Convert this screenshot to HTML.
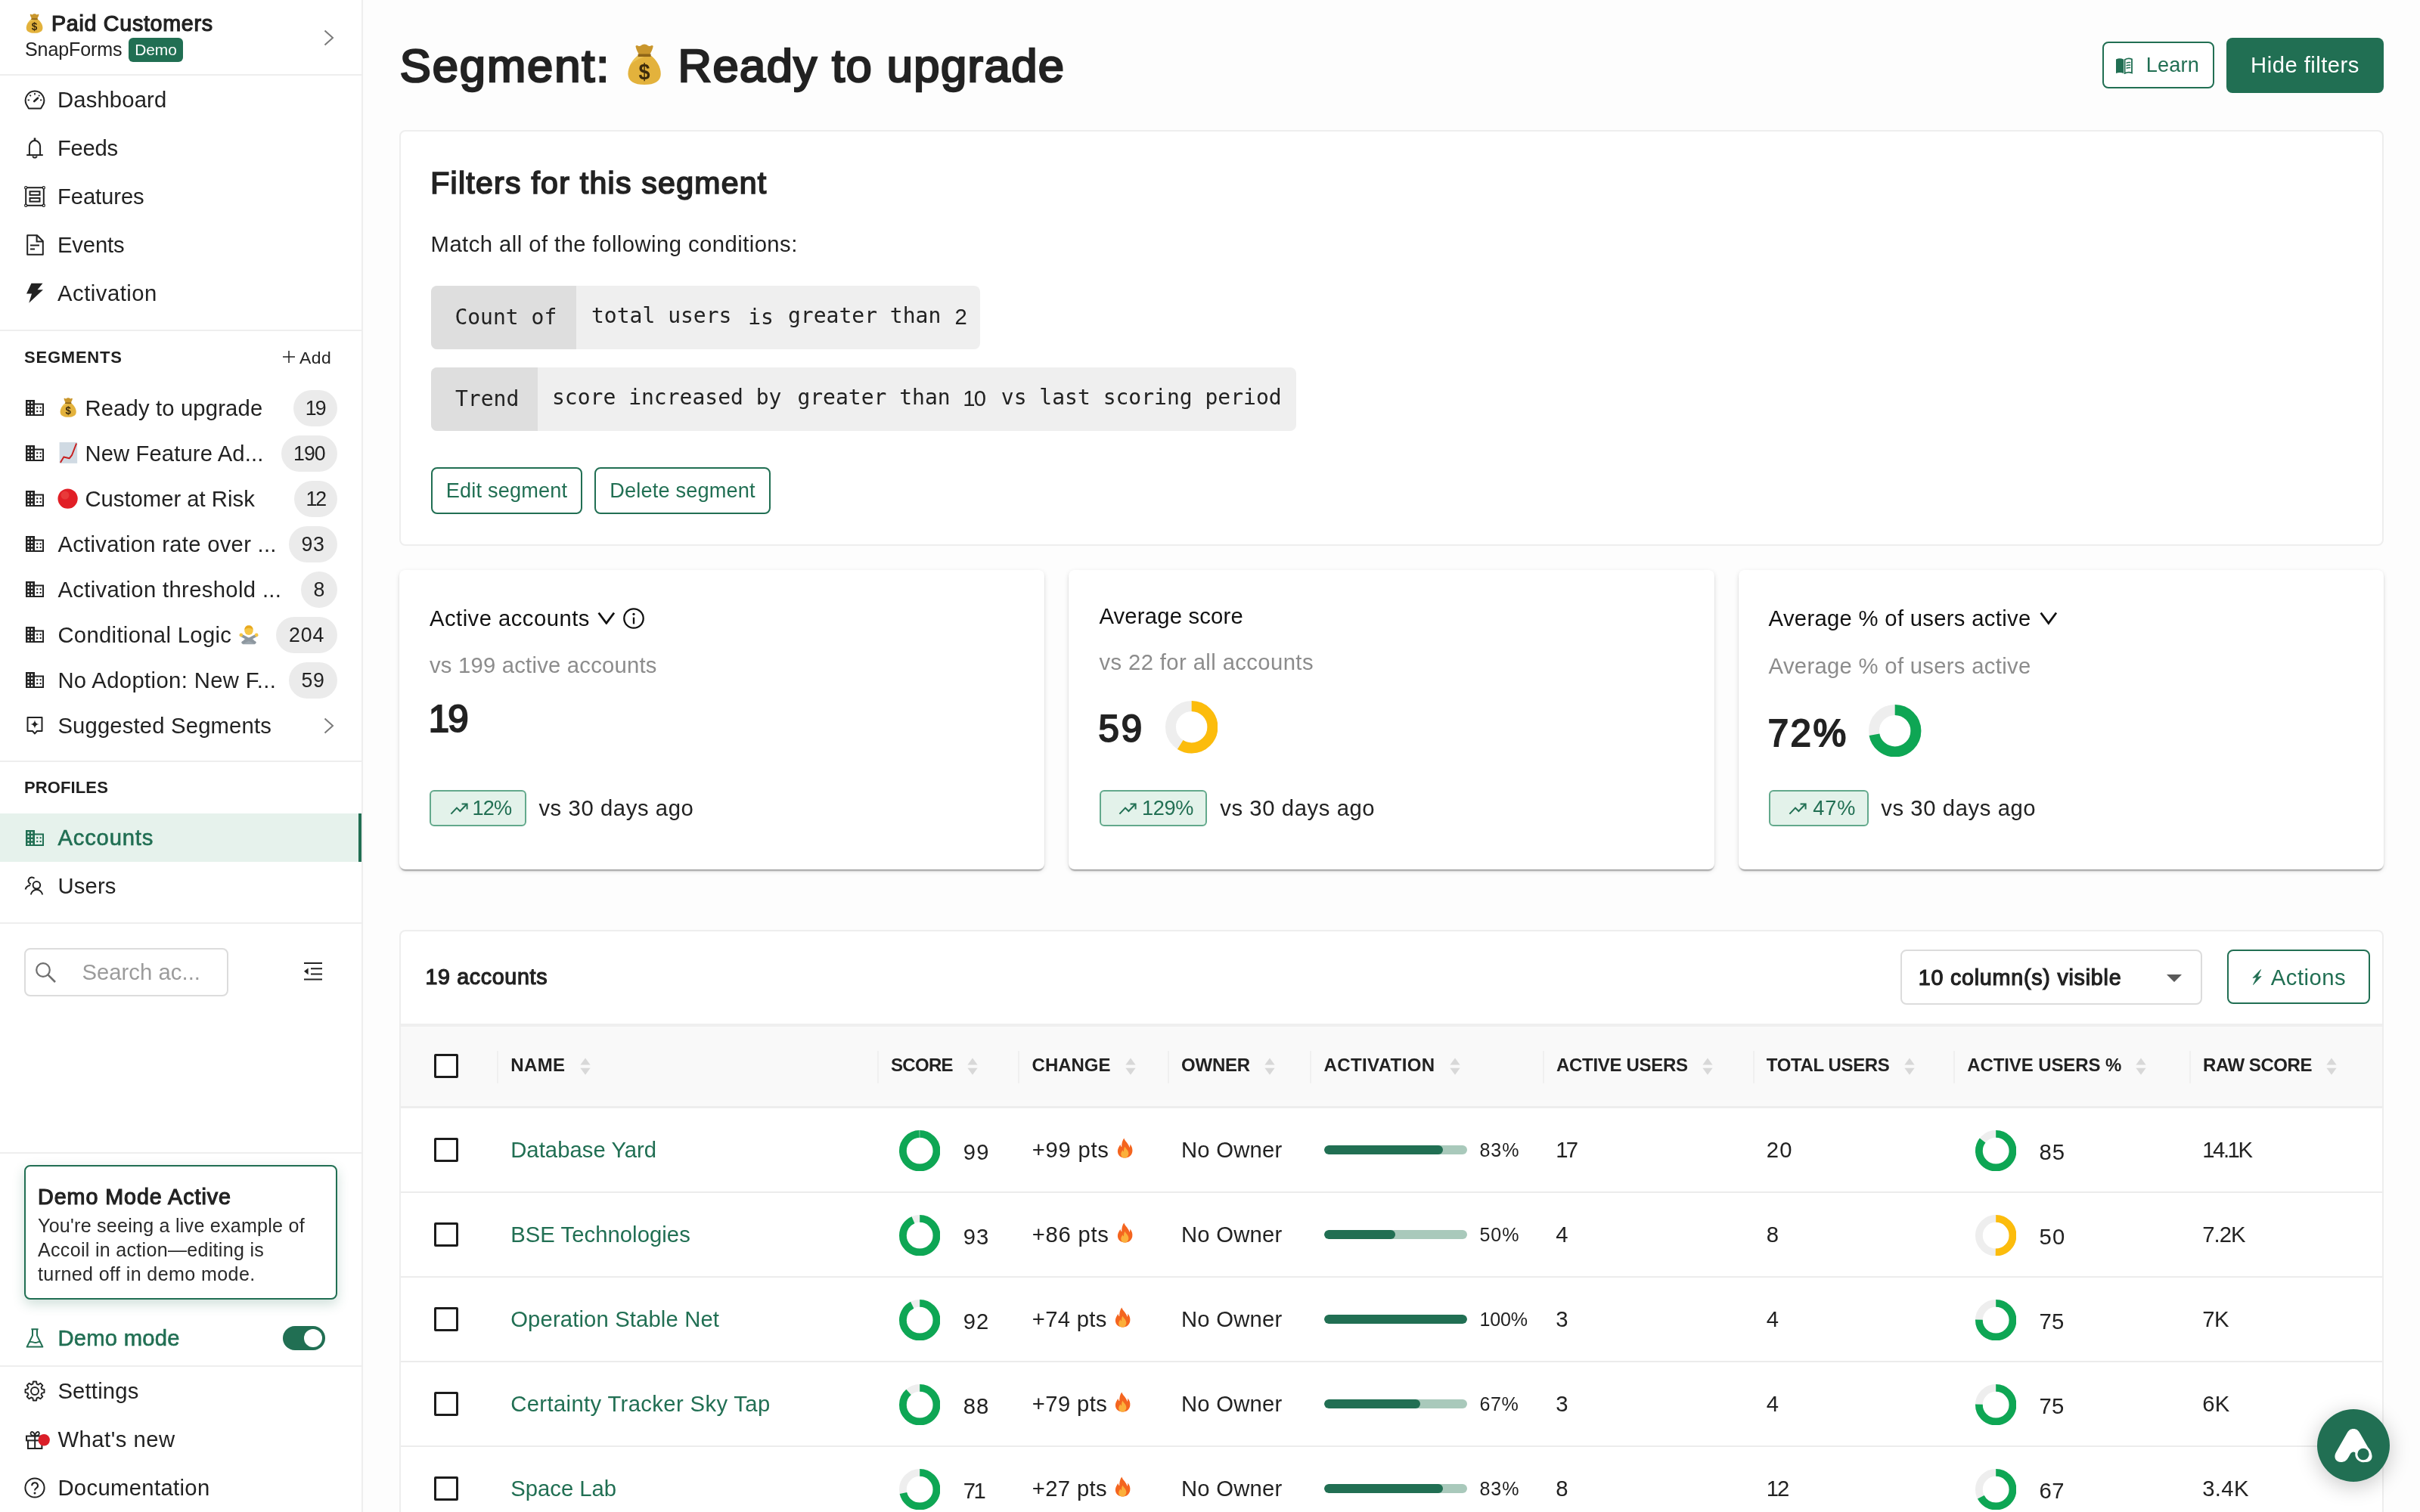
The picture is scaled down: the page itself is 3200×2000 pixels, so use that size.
<!DOCTYPE html>
<html lang="en">
<head>
<meta charset="utf-8">
<title>Segment: Ready to upgrade</title>
<style>
html{zoom:2;overflow:hidden;}
@media (max-width:2000px){html{zoom:1;}}
*{box-sizing:border-box;}
body{margin:0;width:1600px;height:1000px;overflow:hidden;background:#fdfdfd;color:#222;
  font-family:"Liberation Sans","DejaVu Sans",sans-serif;font-size:14.63px;line-height:20px;position:relative;will-change:transform;}
svg{display:block;}
.mono{font-family:"DejaVu Sans Mono","Liberation Mono",monospace;}
.x{position:absolute;white-space:nowrap;line-height:20px;height:20px;color:#222;}
#side{position:absolute;left:0;top:0;width:240px;height:1000px;background:#fff;border-right:1px solid #eeeeee;}
.hr{position:absolute;left:0;width:239px;height:1px;background:#eeeeee;}
i{font-style:normal;}
</style>
</head>
<body>
<div id="side">
<div style="position:absolute;left:16.00px;top:8.50px;"><svg width="13.6" height="14" viewBox="0 0 32 32" preserveAspectRatio="none" role="img" aria-label="💰" fill="none"><path d="M12 9.2C10.6 7 9.6 5 9.2 3.2C9 2.2 10 1.8 11 2.4C12.4 3.2 13.2 2.4 14.2 1.8C15.4 1.2 16.6 1.2 17.8 1.8C18.8 2.4 19.6 3.2 21 2.4C22 1.8 23 2.2 22.8 3.2C22.4 5 21.4 7 20 9.2Z" fill="#c9962c"/><path d="M11.6 9C6.6 12.4 3.2 17.6 3.2 22.8C3.2 28 8 30.6 16 30.6C24 30.6 28.8 28 28.8 22.8C28.8 17.6 25.4 12.4 20.4 9Z" fill="#e3b23c"/><path d="M11.6 9C8.6 11 6.2 13.8 4.6 16.8C8.6 12.8 12.6 11.4 20.4 9Z" fill="#f0cc62" opacity=".7"/><path d="M11 8.4H21V10.4H11Z" fill="#8f6518"/><text x="16" y="26.6" font-family="Liberation Sans, sans-serif" font-weight="700" font-size="16" text-anchor="middle" fill="#3d2b0c">$</text></svg></div>
<div class="x" style="left:34.00px;top:5.73px;font-size:14.35px;letter-spacing:0.345px;-webkit-text-stroke:0.6px #222;">Paid Customers</div>
<div class="x" style="left:16.50px;top:22.35px;font-size:12.54px;letter-spacing:-0.065px;">SnapForms</div>
<div style="position:absolute;left:85.00px;top:25.00px;width:36.00px;height:16.00px;background:#216f53;border-radius:3px;"></div>
<div class="x" style="left:89.10px;top:22.98px;font-size:10.45px;letter-spacing:-0.018px;color:#fff;">Demo</div>
<div style="position:absolute;left:214.00px;top:19.30px;"><svg width="7" height="11" viewBox="0 0 14 22" fill="none"><path d="M1.5 1.5L12 11L1.5 20.5" stroke="#7a7a7a" stroke-width="2"/></svg></div>
<div class="hr" style="top:49px;"></div>
<div style="position:absolute;left:16.00px;top:59.00px;"><svg width="14" height="14" viewBox="0 0 28 28" fill="none"><path d="M6 25.4H22L25.2 20A12.3 12.3 0 1 0 2.8 20Z" stroke="#222" stroke-width="2" stroke-linejoin="round"/><path d="M14 5v2.6M7.3 7.6l1.6 1.6M4.6 14.3h2.4M21 14.3h2.4M20.4 7.8l-1.3 1.3" stroke="#222" stroke-width="1.7"/><path d="M13.2 16L18 11.7" stroke="#222" stroke-width="2.6" stroke-linecap="round"/></svg></div>
<div class="x" style="left:38.00px;top:56.03px;font-size:14.63px;letter-spacing:0.071px;">Dashboard</div>
<div style="position:absolute;left:16.00px;top:91.00px;"><svg width="14" height="14" viewBox="0 0 28 28" fill="none"><path d="M6.9 23V11.2a7.1 7.1 0 0 1 14.2 0V23" stroke="#222" stroke-width="2"/><path d="M3.2 23.1H24.8" stroke="#222" stroke-width="2"/><path d="M14 0.4v3.8" stroke="#222" stroke-width="2.6"/><path d="M11.2 24.4a2.9 2.9 0 0 0 5.6 0" stroke="#222" stroke-width="1.8"/></svg></div>
<div class="x" style="left:38.00px;top:88.03px;font-size:14.63px;letter-spacing:-0.133px;">Feeds</div>
<div style="position:absolute;left:16.00px;top:123.00px;"><svg width="14" height="14" viewBox="0 0 28 28" fill="none"><rect x="2.2" y="2.2" width="23.6" height="23.6" stroke="#222" stroke-width="2"/><rect x="7.5" y="7.3" width="13" height="4.6" stroke="#222" stroke-width="2"/><rect x="7.5" y="16" width="13" height="4.6" stroke="#222" stroke-width="2"/><circle cx="2.2" cy="2.2" r="1.6" fill="#fff" stroke="#222" stroke-width="1.2"/><circle cx="2.2" cy="25.8" r="1.6" fill="#fff" stroke="#222" stroke-width="1.2"/><circle cx="25.8" cy="2.2" r="1.6" fill="#fff" stroke="#222" stroke-width="1.2"/><circle cx="25.8" cy="25.8" r="1.6" fill="#fff" stroke="#222" stroke-width="1.2"/></svg></div>
<div class="x" style="left:38.00px;top:120.03px;font-size:14.63px;letter-spacing:-0.052px;">Features</div>
<div style="position:absolute;left:16.00px;top:155.00px;"><svg width="14" height="14" viewBox="0 0 28 28" fill="none"><path d="M4.2 1.2H17L24.8 9V26.8H4.2Z" stroke="#222" stroke-width="2" stroke-linejoin="round"/><path d="M16.6 1.6V9.4H24.4" stroke="#222" stroke-width="2"/><path d="M8 14.6H20M8 19.4H14" stroke="#222" stroke-width="2"/></svg></div>
<div class="x" style="left:38.00px;top:152.03px;font-size:14.63px;letter-spacing:-0.075px;">Events</div>
<div style="position:absolute;left:16.00px;top:187.00px;"><svg width="14" height="14" viewBox="0 0 28 28" fill="none"><path d="M9.5 0.8H24.5L17.5 9.2H25L6.2 26.8L10 14.6H3Z" fill="#222"/></svg></div>
<div class="x" style="left:38.00px;top:184.03px;font-size:14.63px;letter-spacing:0.250px;">Activation</div>
<div class="hr" style="top:218px;"></div>
<div class="x" style="left:16.00px;top:226.59px;font-size:11.00px;letter-spacing:0.387px;font-weight:700;color:#1f1f1f;">SEGMENTS</div>
<div style="position:absolute;left:186.60px;top:231.60px;"><svg width="9" height="9" viewBox="0 0 18 18"><path d="M9 1V17M1 9H17" stroke="#222" stroke-width="1.5"/></svg></div>
<div class="x" style="left:198.00px;top:226.42px;font-size:11.49px;letter-spacing:0.202px;">Add</div>
<div style="position:absolute;left:17.00px;top:264.45px;"><svg width="12" height="10.5" viewBox="0 0 24 21" fill="none"><rect x="0" y="0" width="12" height="21" fill="#222"/><rect x="2.4" y="2.4" width="2.3" height="2.3" fill="#fff"/><rect x="7.0" y="2.4" width="2.3" height="2.3" fill="#fff"/><rect x="2.4" y="7.2" width="2.3" height="2.3" fill="#fff"/><rect x="7.0" y="7.2" width="2.3" height="2.3" fill="#fff"/><rect x="2.4" y="12" width="2.3" height="2.3" fill="#fff"/><rect x="7.0" y="12" width="2.3" height="2.3" fill="#fff"/><rect x="2.4" y="16.8" width="2.3" height="2.3" fill="#fff"/><rect x="7.0" y="16.8" width="2.3" height="2.3" fill="#fff"/><path d="M12 5.4H23V20H12" stroke="#222" stroke-width="2"/><rect x="14.2" y="9.2" width="2.1" height="2.1" fill="#222"/><rect x="18.6" y="9.2" width="2.1" height="2.1" fill="#222"/><rect x="14.2" y="14" width="2.1" height="2.1" fill="#222"/><rect x="18.6" y="14" width="2.1" height="2.1" fill="#222"/></svg></div>
<div style="position:absolute;left:38.60px;top:262.60px;"><svg width="13.2" height="14" viewBox="0 0 32 32" preserveAspectRatio="none" role="img" aria-label="💰" fill="none"><path d="M12 9.2C10.6 7 9.6 5 9.2 3.2C9 2.2 10 1.8 11 2.4C12.4 3.2 13.2 2.4 14.2 1.8C15.4 1.2 16.6 1.2 17.8 1.8C18.8 2.4 19.6 3.2 21 2.4C22 1.8 23 2.2 22.8 3.2C22.4 5 21.4 7 20 9.2Z" fill="#c9962c"/><path d="M11.6 9C6.6 12.4 3.2 17.6 3.2 22.8C3.2 28 8 30.6 16 30.6C24 30.6 28.8 28 28.8 22.8C28.8 17.6 25.4 12.4 20.4 9Z" fill="#e3b23c"/><path d="M11.6 9C8.6 11 6.2 13.8 4.6 16.8C8.6 12.8 12.6 11.4 20.4 9Z" fill="#f0cc62" opacity=".7"/><path d="M11 8.4H21V10.4H11Z" fill="#8f6518"/><text x="16" y="26.6" font-family="Liberation Sans, sans-serif" font-weight="700" font-size="16" text-anchor="middle" fill="#3d2b0c">$</text></svg></div>
<div class="x" style="left:56.20px;top:260.03px;font-size:14.63px;letter-spacing:0.074px;">Ready to upgrade</div>
<div style="position:absolute;left:193.80px;top:258.00px;width:29.20px;height:24.00px;border-radius:12px;background:#ebebeb;"></div>
<div class="x" style="left:201.93px;top:259.97px;font-size:13.36px;letter-spacing:-0.959px;">19</div>
<div style="position:absolute;left:17.00px;top:294.45px;"><svg width="12" height="10.5" viewBox="0 0 24 21" fill="none"><rect x="0" y="0" width="12" height="21" fill="#222"/><rect x="2.4" y="2.4" width="2.3" height="2.3" fill="#fff"/><rect x="7.0" y="2.4" width="2.3" height="2.3" fill="#fff"/><rect x="2.4" y="7.2" width="2.3" height="2.3" fill="#fff"/><rect x="7.0" y="7.2" width="2.3" height="2.3" fill="#fff"/><rect x="2.4" y="12" width="2.3" height="2.3" fill="#fff"/><rect x="7.0" y="12" width="2.3" height="2.3" fill="#fff"/><rect x="2.4" y="16.8" width="2.3" height="2.3" fill="#fff"/><rect x="7.0" y="16.8" width="2.3" height="2.3" fill="#fff"/><path d="M12 5.4H23V20H12" stroke="#222" stroke-width="2"/><rect x="14.2" y="9.2" width="2.1" height="2.1" fill="#222"/><rect x="18.6" y="9.2" width="2.1" height="2.1" fill="#222"/><rect x="14.2" y="14" width="2.1" height="2.1" fill="#222"/><rect x="18.6" y="14" width="2.1" height="2.1" fill="#222"/></svg></div>
<div style="position:absolute;left:38.40px;top:291.60px;"><svg width="13.4" height="15.9" viewBox="0 0 32 32" preserveAspectRatio="none" role="img" aria-label="📈" fill="none"><rect x="2" y="2" width="28" height="28" fill="#d7e0e8"/><rect x="2" y="2" width="28" height="28" fill="#c4cfda" opacity=".35"/><path d="M3.4 29L8.8 21.6L17.6 23.4L21.6 19.2L28.8 3.6" stroke="#c81e1e" stroke-width="2.2" stroke-linejoin="round"/></svg></div>
<div class="x" style="left:56.20px;top:290.03px;font-size:14.63px;letter-spacing:0.056px;">New Feature Ad...</div>
<div style="position:absolute;left:185.90px;top:288.00px;width:37.10px;height:24.00px;border-radius:12px;background:#ebebeb;"></div>
<div class="x" style="left:194.01px;top:289.97px;font-size:13.36px;letter-spacing:-0.466px;">190</div>
<div style="position:absolute;left:17.00px;top:324.45px;"><svg width="12" height="10.5" viewBox="0 0 24 21" fill="none"><rect x="0" y="0" width="12" height="21" fill="#222"/><rect x="2.4" y="2.4" width="2.3" height="2.3" fill="#fff"/><rect x="7.0" y="2.4" width="2.3" height="2.3" fill="#fff"/><rect x="2.4" y="7.2" width="2.3" height="2.3" fill="#fff"/><rect x="7.0" y="7.2" width="2.3" height="2.3" fill="#fff"/><rect x="2.4" y="12" width="2.3" height="2.3" fill="#fff"/><rect x="7.0" y="12" width="2.3" height="2.3" fill="#fff"/><rect x="2.4" y="16.8" width="2.3" height="2.3" fill="#fff"/><rect x="7.0" y="16.8" width="2.3" height="2.3" fill="#fff"/><path d="M12 5.4H23V20H12" stroke="#222" stroke-width="2"/><rect x="14.2" y="9.2" width="2.1" height="2.1" fill="#222"/><rect x="18.6" y="9.2" width="2.1" height="2.1" fill="#222"/><rect x="14.2" y="14" width="2.1" height="2.1" fill="#222"/><rect x="18.6" y="14" width="2.1" height="2.1" fill="#222"/></svg></div>
<div style="position:absolute;left:37.60px;top:322.60px;"><svg width="14.6" height="14.6" viewBox="0 0 32 32" role="img" aria-label="🔴" fill="none"><circle cx="16" cy="16" r="14.4" fill="#e11f26"/><circle cx="12" cy="11" r="6" fill="#f25a55" opacity=".45"/></svg></div>
<div class="x" style="left:56.20px;top:320.03px;font-size:14.63px;letter-spacing:0.002px;">Customer at Risk</div>
<div style="position:absolute;left:194.30px;top:318.00px;width:28.70px;height:24.00px;border-radius:12px;background:#ebebeb;"></div>
<div class="x" style="left:202.25px;top:319.97px;font-size:13.36px;letter-spacing:-1.023px;">12</div>
<div style="position:absolute;left:17.00px;top:354.45px;"><svg width="12" height="10.5" viewBox="0 0 24 21" fill="none"><rect x="0" y="0" width="12" height="21" fill="#222"/><rect x="2.4" y="2.4" width="2.3" height="2.3" fill="#fff"/><rect x="7.0" y="2.4" width="2.3" height="2.3" fill="#fff"/><rect x="2.4" y="7.2" width="2.3" height="2.3" fill="#fff"/><rect x="7.0" y="7.2" width="2.3" height="2.3" fill="#fff"/><rect x="2.4" y="12" width="2.3" height="2.3" fill="#fff"/><rect x="7.0" y="12" width="2.3" height="2.3" fill="#fff"/><rect x="2.4" y="16.8" width="2.3" height="2.3" fill="#fff"/><rect x="7.0" y="16.8" width="2.3" height="2.3" fill="#fff"/><path d="M12 5.4H23V20H12" stroke="#222" stroke-width="2"/><rect x="14.2" y="9.2" width="2.1" height="2.1" fill="#222"/><rect x="18.6" y="9.2" width="2.1" height="2.1" fill="#222"/><rect x="14.2" y="14" width="2.1" height="2.1" fill="#222"/><rect x="18.6" y="14" width="2.1" height="2.1" fill="#222"/></svg></div>
<div class="x" style="left:38.20px;top:350.03px;font-size:14.63px;letter-spacing:0.135px;">Activation rate over ...</div>
<div style="position:absolute;left:191.10px;top:348.00px;width:31.90px;height:24.00px;border-radius:12px;background:#ebebeb;"></div>
<div class="x" style="left:199.25px;top:349.97px;font-size:13.36px;letter-spacing:0.370px;">93</div>
<div style="position:absolute;left:17.00px;top:384.45px;"><svg width="12" height="10.5" viewBox="0 0 24 21" fill="none"><rect x="0" y="0" width="12" height="21" fill="#222"/><rect x="2.4" y="2.4" width="2.3" height="2.3" fill="#fff"/><rect x="7.0" y="2.4" width="2.3" height="2.3" fill="#fff"/><rect x="2.4" y="7.2" width="2.3" height="2.3" fill="#fff"/><rect x="7.0" y="7.2" width="2.3" height="2.3" fill="#fff"/><rect x="2.4" y="12" width="2.3" height="2.3" fill="#fff"/><rect x="7.0" y="12" width="2.3" height="2.3" fill="#fff"/><rect x="2.4" y="16.8" width="2.3" height="2.3" fill="#fff"/><rect x="7.0" y="16.8" width="2.3" height="2.3" fill="#fff"/><path d="M12 5.4H23V20H12" stroke="#222" stroke-width="2"/><rect x="14.2" y="9.2" width="2.1" height="2.1" fill="#222"/><rect x="18.6" y="9.2" width="2.1" height="2.1" fill="#222"/><rect x="14.2" y="14" width="2.1" height="2.1" fill="#222"/><rect x="18.6" y="14" width="2.1" height="2.1" fill="#222"/></svg></div>
<div class="x" style="left:38.20px;top:380.03px;font-size:14.63px;letter-spacing:0.169px;">Activation threshold ...</div>
<div style="position:absolute;left:199.20px;top:378.00px;width:23.80px;height:24.00px;border-radius:12px;background:#ebebeb;"></div>
<div class="x" style="left:207.20px;top:379.97px;font-size:13.36px;letter-spacing:0.367px;">8</div>
<div style="position:absolute;left:17.00px;top:414.45px;"><svg width="12" height="10.5" viewBox="0 0 24 21" fill="none"><rect x="0" y="0" width="12" height="21" fill="#222"/><rect x="2.4" y="2.4" width="2.3" height="2.3" fill="#fff"/><rect x="7.0" y="2.4" width="2.3" height="2.3" fill="#fff"/><rect x="2.4" y="7.2" width="2.3" height="2.3" fill="#fff"/><rect x="7.0" y="7.2" width="2.3" height="2.3" fill="#fff"/><rect x="2.4" y="12" width="2.3" height="2.3" fill="#fff"/><rect x="7.0" y="12" width="2.3" height="2.3" fill="#fff"/><rect x="2.4" y="16.8" width="2.3" height="2.3" fill="#fff"/><rect x="7.0" y="16.8" width="2.3" height="2.3" fill="#fff"/><path d="M12 5.4H23V20H12" stroke="#222" stroke-width="2"/><rect x="14.2" y="9.2" width="2.1" height="2.1" fill="#222"/><rect x="18.6" y="9.2" width="2.1" height="2.1" fill="#222"/><rect x="14.2" y="14" width="2.1" height="2.1" fill="#222"/><rect x="18.6" y="14" width="2.1" height="2.1" fill="#222"/></svg></div>
<div class="x" style="left:38.20px;top:410.03px;font-size:14.63px;letter-spacing:0.160px;">Conditional Logic</div>
<div style="position:absolute;left:157.37px;top:412.50px;"><svg width="14" height="14" viewBox="0 0 32 32" role="img" aria-label="🙅‍♂️" fill="none"><path d="M7 31C7 24 10 21.4 16 21.4C22 21.4 25 24 25 31Z" fill="#9aa5ad"/><circle cx="16" cy="10.4" r="6.6" fill="#f6c644"/><path d="M9.6 9.2C9.6 4.6 12.4 2.6 16 2.6C19.6 2.6 22.4 4.6 22.4 9.2C20.4 7.4 18.4 6.6 16 6.6C13.6 6.6 11.6 7.4 9.6 9.2Z" fill="#e8a91f"/><path d="M4 17.4L25 28.4M28 17.4L7 28.4" stroke="#8d979f" stroke-width="4.2" stroke-linecap="round"/><circle cx="4.4" cy="17" r="2.6" fill="#f6c644"/><circle cx="27.6" cy="17" r="2.6" fill="#f6c644"/></svg></div>
<div style="position:absolute;left:182.70px;top:408.00px;width:40.30px;height:24.00px;border-radius:12px;background:#ebebeb;"></div>
<div class="x" style="left:190.96px;top:409.97px;font-size:13.36px;letter-spacing:0.496px;">204</div>
<div style="position:absolute;left:17.00px;top:444.45px;"><svg width="12" height="10.5" viewBox="0 0 24 21" fill="none"><rect x="0" y="0" width="12" height="21" fill="#222"/><rect x="2.4" y="2.4" width="2.3" height="2.3" fill="#fff"/><rect x="7.0" y="2.4" width="2.3" height="2.3" fill="#fff"/><rect x="2.4" y="7.2" width="2.3" height="2.3" fill="#fff"/><rect x="7.0" y="7.2" width="2.3" height="2.3" fill="#fff"/><rect x="2.4" y="12" width="2.3" height="2.3" fill="#fff"/><rect x="7.0" y="12" width="2.3" height="2.3" fill="#fff"/><rect x="2.4" y="16.8" width="2.3" height="2.3" fill="#fff"/><rect x="7.0" y="16.8" width="2.3" height="2.3" fill="#fff"/><path d="M12 5.4H23V20H12" stroke="#222" stroke-width="2"/><rect x="14.2" y="9.2" width="2.1" height="2.1" fill="#222"/><rect x="18.6" y="9.2" width="2.1" height="2.1" fill="#222"/><rect x="14.2" y="14" width="2.1" height="2.1" fill="#222"/><rect x="18.6" y="14" width="2.1" height="2.1" fill="#222"/></svg></div>
<div class="x" style="left:38.20px;top:440.03px;font-size:14.63px;letter-spacing:0.178px;">No Adoption: New F...</div>
<div style="position:absolute;left:191.10px;top:438.00px;width:31.90px;height:24.00px;border-radius:12px;background:#ebebeb;"></div>
<div class="x" style="left:199.31px;top:439.97px;font-size:13.36px;letter-spacing:0.309px;">59</div>
<div style="position:absolute;left:16.00px;top:473.00px;"><svg width="14" height="14" viewBox="0 0 28 28" fill="none"><path d="M4.5 3H23.5V21H17L14 24.4L11 21H4.5Z" stroke="#222" stroke-width="2" stroke-linejoin="round"/><path d="M14 6.2C14.6 10 16 11.4 19.8 12C16 12.6 14.6 14 14 17.8C13.4 14 12 12.6 8.2 12C12 11.4 13.4 10 14 6.2Z" fill="#222"/></svg></div>
<div class="x" style="left:38.20px;top:470.03px;font-size:14.63px;letter-spacing:0.082px;">Suggested Segments</div>
<div style="position:absolute;left:214.00px;top:474.50px;"><svg width="7" height="11" viewBox="0 0 14 22" fill="none"><path d="M1.5 1.5L12 11L1.5 20.5" stroke="#7a7a7a" stroke-width="2"/></svg></div>
<div class="hr" style="top:503px;"></div>
<div class="x" style="left:16.00px;top:511.19px;font-size:11.00px;letter-spacing:0.058px;font-weight:700;color:#1f1f1f;">PROFILES</div>
<div style="position:absolute;left:0.00px;top:538.00px;width:239.00px;height:32.00px;background:#e6f2ec;border-right:2px solid #216f53;"></div>
<div style="position:absolute;left:17.00px;top:548.75px;"><svg width="12" height="10.5" viewBox="0 0 24 21" fill="none"><rect x="0" y="0" width="12" height="21" fill="#216f53"/><rect x="2.4" y="2.4" width="2.3" height="2.3" fill="#e6f2ec"/><rect x="7.0" y="2.4" width="2.3" height="2.3" fill="#e6f2ec"/><rect x="2.4" y="7.2" width="2.3" height="2.3" fill="#e6f2ec"/><rect x="7.0" y="7.2" width="2.3" height="2.3" fill="#e6f2ec"/><rect x="2.4" y="12" width="2.3" height="2.3" fill="#e6f2ec"/><rect x="7.0" y="12" width="2.3" height="2.3" fill="#e6f2ec"/><rect x="2.4" y="16.8" width="2.3" height="2.3" fill="#e6f2ec"/><rect x="7.0" y="16.8" width="2.3" height="2.3" fill="#e6f2ec"/><path d="M12 5.4H23V20H12" stroke="#216f53" stroke-width="2"/><rect x="14.2" y="9.2" width="2.1" height="2.1" fill="#216f53"/><rect x="18.6" y="9.2" width="2.1" height="2.1" fill="#216f53"/><rect x="14.2" y="14" width="2.1" height="2.1" fill="#216f53"/><rect x="18.6" y="14" width="2.1" height="2.1" fill="#216f53"/></svg></div>
<div class="x" style="left:38.20px;top:544.03px;font-size:14.63px;letter-spacing:0.410px;color:#216f53;-webkit-text-stroke:0.3px #216f53;">Accounts</div>
<div style="position:absolute;left:16.00px;top:579.00px;"><svg width="14" height="14" viewBox="0 0 28 28" fill="none"><circle cx="16.4" cy="12.8" r="4.8" stroke="#222" stroke-width="2"/><path d="M8.8 25.4a7.8 7.8 0 0 1 15.4 0" stroke="#222" stroke-width="2"/><path d="M13.5 3.9a4.6 4.6 0 1 0 -4.6 7.6" stroke="#222" stroke-width="2"/><path d="M1.6 18.6a7.4 7.4 0 0 1 6.4 -5.6" stroke="#222" stroke-width="2"/></svg></div>
<div class="x" style="left:38.20px;top:576.03px;font-size:14.63px;letter-spacing:0.085px;">Users</div>
<div class="hr" style="top:610px;"></div>
<div style="position:absolute;left:16.00px;top:627.00px;width:135.00px;height:32.00px;border:1px solid #dcdcdc;border-radius:4px;background:#fff;"></div>
<div style="position:absolute;left:23.00px;top:636.00px;"><svg width="14" height="14" viewBox="0 0 28 28" fill="none"><circle cx="11" cy="11" r="8.8" stroke="#6f6f6f" stroke-width="2.2"/><path d="M17.4 17.4L27 27" stroke="#6f6f6f" stroke-width="2.6"/></svg></div>
<div class="x" style="left:54.20px;top:633.03px;font-size:14.63px;letter-spacing:0.024px;color:#9b9b9b;">Search ac...</div>
<div style="position:absolute;left:200.50px;top:636.20px;"><svg width="13" height="13" viewBox="0 0 26 26" fill="none"><path d="M1 2H25M10 9.2H25M10 16.4H25M1 23.6H25" stroke="#222" stroke-width="2"/><path d="M6.6 8.4V17.2L1 12.8Z" fill="#222"/></svg></div>
<div class="hr" style="top:762px;"></div>
<div style="position:absolute;left:16.00px;top:770.50px;width:207.00px;height:89.00px;border:1px solid #216f53;border-radius:4px;background:#fff;box-shadow:0 3px 8px rgba(33,111,83,.22);"></div>
<div class="x" style="left:25.00px;top:781.33px;font-size:14.35px;letter-spacing:0.473px;-webkit-text-stroke:0.6px #222;">Demo Mode Active</div>
<div class="x" style="left:25.00px;top:800.45px;font-size:12.54px;letter-spacing:0.120px;color:#2a2a2a;">You're seeing a live example of</div>
<div class="x" style="left:25.00px;top:816.35px;font-size:12.54px;letter-spacing:0.145px;color:#2a2a2a;">Accoil in action—editing is</div>
<div class="x" style="left:25.00px;top:832.25px;font-size:12.54px;letter-spacing:0.193px;color:#2a2a2a;">turned off in demo mode.</div>
<div style="position:absolute;left:16.00px;top:878.00px;"><svg width="14" height="14" viewBox="0 0 28 28" fill="none"><path d="M9.4 2.2H18.6M11 2.4V10.6L3.6 25.6H24.4L17 10.6V2.4" stroke="#216f53" stroke-width="2" stroke-linejoin="round"/><path d="M6.4 19.6C10 17 13 21.4 17 19.6C19 18.6 20.6 18.8 21.8 19.6" stroke="#216f53" stroke-width="1.8"/></svg></div>
<div class="x" style="left:38.20px;top:875.03px;font-size:14.63px;letter-spacing:0.115px;color:#216f53;-webkit-text-stroke:0.3px #216f53;">Demo mode</div>
<div style="position:absolute;left:187.00px;top:877.00px;width:28.00px;height:16.00px;border-radius:8px;background:#216f53;"><i style="position:absolute;right:2px;top:2px;width:12px;height:12px;border-radius:6px;background:#fff;"></i></div>
<div class="hr" style="top:903px;"></div>
<div style="position:absolute;left:16.00px;top:913.00px;"><svg width="14" height="14" viewBox="0 0 28 28" fill="none"><path d="M11.41 4.65L11.90 1.47L16.10 1.47L16.59 4.65L18.78 5.56L21.37 3.66L24.34 6.63L22.44 9.22L23.35 11.41L26.53 11.90L26.53 16.10L23.35 16.59L22.44 18.78L24.34 21.37L21.37 24.34L18.78 22.44L16.59 23.35L16.10 26.53L11.90 26.53L11.41 23.35L9.22 22.44L6.63 24.34L3.66 21.37L5.56 18.78L4.65 16.59L1.47 16.10L1.47 11.90L4.65 11.41L5.56 9.22L3.66 6.63L6.63 3.66L9.22 5.56Z" stroke="#222" stroke-width="1.9" stroke-linejoin="round"/><circle cx="14" cy="14" r="5" stroke="#222" stroke-width="1.9"/></svg></div>
<div class="x" style="left:38.20px;top:910.03px;font-size:14.63px;letter-spacing:0.092px;">Settings</div>
<div style="position:absolute;left:16.00px;top:945.00px;"><svg width="17" height="14" viewBox="0 0 34 28" style="margin-right:-3px;" fill="none"><rect x="3" y="9.6" width="22.4" height="5.8" stroke="#222" stroke-width="2"/><path d="M5 15.4V26H23.4V15.4M14.2 9.6V26" stroke="#222" stroke-width="2"/><path d="M14.2 9.4C10 9.4 8 7.6 8.6 5.4C9.4 2.8 13.2 3.6 14.2 9.4C15.2 3.6 19 2.8 19.8 5.4C20.4 7.6 18.4 9.4 14.2 9.4Z" stroke="#222" stroke-width="1.8"/><circle cx="26.2" cy="14.8" r="7.7" fill="#da1e28"/></svg></div>
<div class="x" style="left:38.20px;top:942.03px;font-size:14.63px;letter-spacing:0.252px;">What's new</div>
<div style="position:absolute;left:16.00px;top:977.00px;"><svg width="14" height="14" viewBox="0 0 28 28" fill="none"><circle cx="14" cy="14" r="12.6" stroke="#222" stroke-width="2"/><path d="M10.2 11.2a3.9 3.9 0 1 1 5.6 3.4C14.4 15.4 14 16 14 17.6" stroke="#222" stroke-width="2"/><circle cx="14" cy="21" r="1.5" fill="#222"/></svg></div>
<div class="x" style="left:38.20px;top:974.03px;font-size:14.63px;letter-spacing:0.170px;">Documentation</div>
</div>
<div id="main">
<div class="x" style="left:264.40px;top:23.35px;font-size:30.75px;letter-spacing:0.957px;-webkit-text-stroke:1.29px #222;line-height:40px;height:40px;">Segment:</div>
<div style="position:absolute;left:412.60px;top:27.80px;"><svg width="27.1" height="29.3" viewBox="0 0 32 32" preserveAspectRatio="none" role="img" aria-label="💰" fill="none"><path d="M12 9.2C10.6 7 9.6 5 9.2 3.2C9 2.2 10 1.8 11 2.4C12.4 3.2 13.2 2.4 14.2 1.8C15.4 1.2 16.6 1.2 17.8 1.8C18.8 2.4 19.6 3.2 21 2.4C22 1.8 23 2.2 22.8 3.2C22.4 5 21.4 7 20 9.2Z" fill="#c9962c"/><path d="M11.6 9C6.6 12.4 3.2 17.6 3.2 22.8C3.2 28 8 30.6 16 30.6C24 30.6 28.8 28 28.8 22.8C28.8 17.6 25.4 12.4 20.4 9Z" fill="#e3b23c"/><path d="M11.6 9C8.6 11 6.2 13.8 4.6 16.8C8.6 12.8 12.6 11.4 20.4 9Z" fill="#f0cc62" opacity=".7"/><path d="M11 8.4H21V10.4H11Z" fill="#8f6518"/><text x="16" y="26.6" font-family="Liberation Sans, sans-serif" font-weight="700" font-size="16" text-anchor="middle" fill="#3d2b0c">$</text></svg></div>
<div class="x" style="left:448.30px;top:23.35px;font-size:30.75px;letter-spacing:0.716px;-webkit-text-stroke:1.29px #222;line-height:40px;height:40px;">Ready to upgrade</div>
<div style="position:absolute;left:1390.00px;top:27.50px;width:74.00px;height:31.00px;border:1px solid #216f53;border-radius:4px;background:#fff;"></div>
<div style="position:absolute;left:1398.50px;top:38.20px;"><svg width="11.5" height="11" viewBox="0 0 23 22" fill="none"><path d="M1 2.4C4.4 1 8 1 11 2.6V21C8 19.6 4.4 19.6 1 21Z" fill="#216f53"/><path d="M12.6 3C15.4 1.4 19 1 22 2.4V20.4C19 19.2 15.4 19.4 12.6 21Z" stroke="#216f53" stroke-width="1.8"/><path d="M14.6 7.4C16.6 6.6 18.4 6.4 20.2 6.8M14.6 10.8C16.6 10 18.4 9.8 20.2 10.2M14.6 14.2C16.6 13.4 18.4 13.2 20.2 13.6" stroke="#216f53" stroke-width="1.5"/></svg></div>
<div class="x" style="left:1418.90px;top:33.19px;font-size:13.58px;letter-spacing:0.078px;color:#216f53;">Learn</div>
<div style="position:absolute;left:1472.00px;top:25.00px;width:104.00px;height:36.50px;border-radius:4px;background:#216f53;"></div>
<div class="x" style="left:1488.05px;top:33.13px;font-size:14.63px;letter-spacing:0.233px;color:#fff;">Hide filters</div>
<div style="position:absolute;left:264.00px;top:86.00px;width:1312.00px;height:275.00px;background:#fff;border:1px solid #eeeeee;border-radius:4px;"></div>
<div class="x" style="left:284.60px;top:105.90px;font-size:20.50px;letter-spacing:0.639px;-webkit-text-stroke:0.86px #222;line-height:30px;height:30px;">Filters for this segment</div>
<div class="x" style="left:284.80px;top:151.33px;font-size:14.63px;letter-spacing:0.222px;">Match all of the following conditions:</div>
<div style="position:absolute;left:285.00px;top:189.00px;width:363.00px;height:42.00px;border-radius:4px;background:#efefef;overflow:hidden;"><i style="position:absolute;left:0;top:0;width:96px;height:42px;background:#dedede;"></i></div>
<div class="x mono" style="left:300.70px;top:199.96px;font-size:14px;color:#222;">Count of</div>
<div class="x mono" style="left:391.00px;top:198.76px;font-size:14px;color:#222;">total users</div>
<div class="x mono" style="left:494.60px;top:199.96px;font-size:14px;color:#222;">is</div>
<div class="x mono" style="left:521.00px;top:198.76px;font-size:14px;color:#222;">greater than</div>
<div class="x" style="left:631.20px;top:199.53px;font-size:14.63px;letter-spacing:0.401px;">2</div>
<div style="position:absolute;left:285.00px;top:243.00px;width:572.00px;height:42.00px;border-radius:4px;background:#efefef;overflow:hidden;"><i style="position:absolute;left:0;top:0;width:70.4px;height:42px;background:#dedede;"></i></div>
<div class="x mono" style="left:301.00px;top:253.96px;font-size:14px;color:#222;">Trend</div>
<div class="x mono" style="left:365.00px;top:252.76px;font-size:14px;color:#222;">score increased by</div>
<div class="x mono" style="left:527.20px;top:252.76px;font-size:14px;color:#222;">greater than</div>
<div class="x" style="left:636.60px;top:253.53px;font-size:14.63px;letter-spacing:-0.873px;">10</div>
<div class="x mono" style="left:661.90px;top:252.76px;font-size:14px;color:#222;">vs last scoring period</div>
<div style="position:absolute;left:285.00px;top:309.00px;width:100.00px;height:31.00px;border:1px solid #216f53;border-radius:4px;background:#fff;"></div>
<div class="x" style="left:294.93px;top:314.59px;font-size:13.58px;letter-spacing:0.072px;color:#216f53;">Edit segment</div>
<div style="position:absolute;left:393.00px;top:309.00px;width:116.50px;height:31.00px;border:1px solid #216f53;border-radius:4px;background:#fff;"></div>
<div class="x" style="left:403.07px;top:314.59px;font-size:13.58px;letter-spacing:0.087px;color:#216f53;">Delete segment</div>
<div style="position:absolute;left:264.00px;top:376.80px;width:426.70px;height:198.20px;background:#fff;border-radius:4px;box-shadow:0 2px 1px -1px rgba(0,0,0,.2),0 1px 1px 0 rgba(0,0,0,.14),0 1px 3px 0 rgba(0,0,0,.12);"></div>
<div style="position:absolute;left:706.60px;top:376.80px;width:426.70px;height:198.20px;background:#fff;border-radius:4px;box-shadow:0 2px 1px -1px rgba(0,0,0,.2),0 1px 1px 0 rgba(0,0,0,.14),0 1px 3px 0 rgba(0,0,0,.12);"></div>
<div style="position:absolute;left:1149.30px;top:376.80px;width:426.70px;height:198.20px;background:#fff;border-radius:4px;box-shadow:0 2px 1px -1px rgba(0,0,0,.2),0 1px 1px 0 rgba(0,0,0,.14),0 1px 3px 0 rgba(0,0,0,.12);"></div>
<div class="x" style="left:284.00px;top:398.93px;font-size:14.63px;letter-spacing:0.233px;color:#111;">Active accounts</div>
<div style="position:absolute;left:395.00px;top:404.90px;"><svg width="11.8" height="8.2" viewBox="0 0 23.6 16.4" fill="none"><path d="M1.6 0.6L11.8 14.4L22 0.6" stroke="#111" stroke-width="2.7"/></svg></div>
<div style="position:absolute;left:412.00px;top:401.90px;"><svg width="14" height="14" viewBox="0 0 28 28" fill="none"><circle cx="14" cy="14" r="12.7" stroke="#111" stroke-width="2.3"/><path d="M14 12.6V21.4" stroke="#111" stroke-width="2.3"/><circle cx="14" cy="8.3" r="1.6" fill="#111"/></svg></div>
<div class="x" style="left:284.00px;top:430.23px;font-size:14.63px;letter-spacing:0.107px;color:#8c8c8c;">vs 199 active accounts</div>
<div class="x" style="left:283.40px;top:460.48px;font-size:24.60px;letter-spacing:-0.931px;-webkit-text-stroke:1.03px #222;line-height:30px;height:30px;">19</div>
<div style="position:absolute;left:284.00px;top:522.50px;width:63.80px;height:24.00px;border:1px solid #63a98c;background:#e3f2ea;border-radius:3px;"></div><div style="position:absolute;left:297.30px;top:529.60px;"><svg width="12" height="10.5" viewBox="0 0 24 21" fill="none"><path d="M1.4 17.6L9 9.6L13.4 14L22 5" stroke="#216f53" stroke-width="2"/><path d="M15.6 4.4H22.6V11.4" stroke="#216f53" stroke-width="2"/></svg></div><div class="x" style="left:312.20px;top:524.39px;font-size:13.58px;letter-spacing:-0.403px;color:#216f53;">12%</div>
<div class="x" style="left:356.20px;top:524.53px;font-size:14.63px;letter-spacing:0.296px;">vs 30 days ago</div>
<div class="x" style="left:726.70px;top:397.73px;font-size:14.63px;letter-spacing:0.092px;color:#111;">Average score</div>
<div class="x" style="left:726.70px;top:427.93px;font-size:14.63px;letter-spacing:0.199px;color:#8c8c8c;">vs 22 for all accounts</div>
<div class="x" style="left:726.20px;top:467.18px;font-size:24.60px;letter-spacing:1.541px;-webkit-text-stroke:1.03px #222;line-height:30px;height:30px;">59</div>
<div style="position:absolute;left:770.35px;top:463.65px;"><svg width="34.7" height="34.7" viewBox="0 0 34.7 34.7" fill="none"><circle cx="17.35" cy="17.35" r="13.850000000000001" stroke="#eeeeee" stroke-width="7"/><circle cx="17.35" cy="17.35" r="13.850000000000001" stroke="#fcbc0c" stroke-width="7" stroke-dasharray="51.34 87.02" transform="rotate(-90 17.35 17.35)"/></svg></div>
<div style="position:absolute;left:726.80px;top:522.50px;width:71.20px;height:24.00px;border:1px solid #63a98c;background:#e3f2ea;border-radius:3px;"></div><div style="position:absolute;left:739.60px;top:529.60px;"><svg width="12" height="10.5" viewBox="0 0 24 21" fill="none"><path d="M1.4 17.6L9 9.6L13.4 14L22 5" stroke="#216f53" stroke-width="2"/><path d="M15.6 4.4H22.6V11.4" stroke="#216f53" stroke-width="2"/></svg></div><div class="x" style="left:755.00px;top:524.39px;font-size:13.58px;letter-spacing:-0.176px;color:#216f53;">129%</div>
<div class="x" style="left:806.60px;top:524.53px;font-size:14.63px;letter-spacing:0.296px;">vs 30 days ago</div>
<div class="x" style="left:1169.30px;top:399.23px;font-size:14.63px;letter-spacing:0.152px;color:#111;">Average % of users active</div>
<div style="position:absolute;left:1348.40px;top:405.20px;"><svg width="11.8" height="8.2" viewBox="0 0 23.6 16.4" fill="none"><path d="M1.6 0.6L11.8 14.4L22 0.6" stroke="#111" stroke-width="2.7"/></svg></div>
<div class="x" style="left:1169.30px;top:430.33px;font-size:14.63px;letter-spacing:0.152px;color:#8c8c8c;">Average % of users active</div>
<div class="x" style="left:1168.90px;top:469.78px;font-size:24.60px;letter-spacing:1.217px;-webkit-text-stroke:1.03px #222;line-height:30px;height:30px;">72%</div>
<div style="position:absolute;left:1235.65px;top:465.95px;"><svg width="34.7" height="34.7" viewBox="0 0 34.7 34.7" fill="none"><circle cx="17.35" cy="17.35" r="13.850000000000001" stroke="#eeeeee" stroke-width="7"/><circle cx="17.35" cy="17.35" r="13.850000000000001" stroke="#0ea654" stroke-width="7" stroke-dasharray="62.66 87.02" transform="rotate(-90 17.35 17.35)"/></svg></div>
<div style="position:absolute;left:1169.70px;top:522.50px;width:65.80px;height:24.00px;border:1px solid #63a98c;background:#e3f2ea;border-radius:3px;"></div><div style="position:absolute;left:1182.50px;top:529.60px;"><svg width="12" height="10.5" viewBox="0 0 24 21" fill="none"><path d="M1.4 17.6L9 9.6L13.4 14L22 5" stroke="#216f53" stroke-width="2"/><path d="M15.6 4.4H22.6V11.4" stroke="#216f53" stroke-width="2"/></svg></div><div class="x" style="left:1198.60px;top:524.39px;font-size:13.58px;letter-spacing:0.443px;color:#216f53;">47%</div>
<div class="x" style="left:1243.60px;top:524.53px;font-size:14.63px;letter-spacing:0.296px;">vs 30 days ago</div>
<div style="position:absolute;left:264.00px;top:615.00px;width:1312.00px;height:385.00px;background:#fff;border:1px solid #eeeeee;border-bottom:none;border-radius:4px 4px 0 0;"></div>
<div class="x" style="left:281.20px;top:636.03px;font-size:14.35px;letter-spacing:0.322px;-webkit-text-stroke:0.6px #222;">19 accounts</div>
<div style="position:absolute;left:1256.60px;top:628.00px;width:199.60px;height:36.60px;border:1px solid #dcdcdc;border-radius:4px;background:#fff;"></div>
<div class="x" style="left:1268.40px;top:636.63px;font-size:14.35px;letter-spacing:0.377px;color:#222;-webkit-text-stroke:0.6px #222;">10 column(s) visible</div>
<div style="position:absolute;left:1432.60px;top:644.50px;"><svg width="10" height="5" viewBox="0 0 20 10"><path d="M0 0H20L10 10Z" fill="#5a5a5a"/></svg></div>
<div style="position:absolute;left:1472.60px;top:628.00px;width:94.30px;height:36.20px;border:1px solid #216f53;border-radius:4px;background:#fff;"></div>
<div style="position:absolute;left:1488.60px;top:641.20px;"><svg width="7.5" height="10.5" viewBox="0 0 15 21" fill="none"><path d="M12.5 0.5L2 11.6L7.2 10.5L2.5 20.5L13 9.4L7.8 10.5Z" fill="#216f53" stroke="#216f53" stroke-width="0.8" stroke-linejoin="round"/></svg></div>
<div class="x" style="left:1501.40px;top:636.33px;font-size:14.63px;letter-spacing:0.244px;color:#216f53;">Actions</div>
<div style="position:absolute;left:265.00px;top:677.00px;width:1310.00px;height:56.00px;background:#f9f9f9;border-top:2px solid #efefef;border-bottom:1.5px solid #ededed;"></div>
<div style="position:absolute;left:287.00px;top:697.00px;width:16.20px;height:16.20px;border:1.5px solid #1c1c1c;border-radius:1px;background:#fff;"></div>
<div style="position:absolute;left:328.50px;top:695.00px;width:1.00px;height:21.60px;background:#f0f0f0;"></div>
<div class="x" style="left:337.60px;top:694.74px;font-size:12.00px;letter-spacing:0.211px;font-weight:700;color:#222;">NAME</div>
<div style="position:absolute;left:383.38px;top:699.30px;"><svg width="7" height="11.6" viewBox="0 0 14 23.2" fill="none"><path d="M7 0.4L13.6 9.4H0.4Z" fill="#d8d8d8"/><path d="M7 22.8L13.6 13.8H0.4Z" fill="#d8d8d8"/></svg></div>
<div style="position:absolute;left:579.90px;top:695.00px;width:1.00px;height:21.60px;background:#f0f0f0;"></div>
<div class="x" style="left:589.00px;top:694.74px;font-size:12.00px;letter-spacing:-0.342px;font-weight:700;color:#222;">SCORE</div>
<div style="position:absolute;left:639.56px;top:699.30px;"><svg width="7" height="11.6" viewBox="0 0 14 23.2" fill="none"><path d="M7 0.4L13.6 9.4H0.4Z" fill="#d8d8d8"/><path d="M7 22.8L13.6 13.8H0.4Z" fill="#d8d8d8"/></svg></div>
<div style="position:absolute;left:673.20px;top:695.00px;width:1.00px;height:21.60px;background:#f0f0f0;"></div>
<div class="x" style="left:682.30px;top:694.74px;font-size:12.00px;letter-spacing:-0.020px;font-weight:700;color:#222;">CHANGE</div>
<div style="position:absolute;left:743.79px;top:699.30px;"><svg width="7" height="11.6" viewBox="0 0 14 23.2" fill="none"><path d="M7 0.4L13.6 9.4H0.4Z" fill="#d8d8d8"/><path d="M7 22.8L13.6 13.8H0.4Z" fill="#d8d8d8"/></svg></div>
<div style="position:absolute;left:771.90px;top:695.00px;width:1.00px;height:21.60px;background:#f0f0f0;"></div>
<div class="x" style="left:781.00px;top:694.74px;font-size:12.00px;letter-spacing:-0.104px;font-weight:700;color:#222;">OWNER</div>
<div style="position:absolute;left:836.07px;top:699.30px;"><svg width="7" height="11.6" viewBox="0 0 14 23.2" fill="none"><path d="M7 0.4L13.6 9.4H0.4Z" fill="#d8d8d8"/><path d="M7 22.8L13.6 13.8H0.4Z" fill="#d8d8d8"/></svg></div>
<div style="position:absolute;left:866.20px;top:695.00px;width:1.00px;height:21.60px;background:#f0f0f0;"></div>
<div class="x" style="left:875.30px;top:694.74px;font-size:12.00px;letter-spacing:0.188px;font-weight:700;color:#222;">ACTIVATION</div>
<div style="position:absolute;left:958.33px;top:699.30px;"><svg width="7" height="11.6" viewBox="0 0 14 23.2" fill="none"><path d="M7 0.4L13.6 9.4H0.4Z" fill="#d8d8d8"/><path d="M7 22.8L13.6 13.8H0.4Z" fill="#d8d8d8"/></svg></div>
<div style="position:absolute;left:1019.90px;top:695.00px;width:1.00px;height:21.60px;background:#f0f0f0;"></div>
<div class="x" style="left:1029.00px;top:694.74px;font-size:12.00px;letter-spacing:-0.149px;font-weight:700;color:#222;">ACTIVE USERS</div>
<div style="position:absolute;left:1125.49px;top:699.30px;"><svg width="7" height="11.6" viewBox="0 0 14 23.2" fill="none"><path d="M7 0.4L13.6 9.4H0.4Z" fill="#d8d8d8"/><path d="M7 22.8L13.6 13.8H0.4Z" fill="#d8d8d8"/></svg></div>
<div style="position:absolute;left:1158.80px;top:695.00px;width:1.00px;height:21.60px;background:#f0f0f0;"></div>
<div class="x" style="left:1167.90px;top:694.74px;font-size:12.00px;letter-spacing:-0.182px;font-weight:700;color:#222;">TOTAL USERS</div>
<div style="position:absolute;left:1258.84px;top:699.30px;"><svg width="7" height="11.6" viewBox="0 0 14 23.2" fill="none"><path d="M7 0.4L13.6 9.4H0.4Z" fill="#d8d8d8"/><path d="M7 22.8L13.6 13.8H0.4Z" fill="#d8d8d8"/></svg></div>
<div style="position:absolute;left:1291.50px;top:695.00px;width:1.00px;height:21.60px;background:#f0f0f0;"></div>
<div class="x" style="left:1300.60px;top:694.74px;font-size:12.00px;letter-spacing:-0.051px;font-weight:700;color:#222;">ACTIVE USERS %</div>
<div style="position:absolute;left:1412.17px;top:699.30px;"><svg width="7" height="11.6" viewBox="0 0 14 23.2" fill="none"><path d="M7 0.4L13.6 9.4H0.4Z" fill="#d8d8d8"/><path d="M7 22.8L13.6 13.8H0.4Z" fill="#d8d8d8"/></svg></div>
<div style="position:absolute;left:1447.40px;top:695.00px;width:1.00px;height:21.60px;background:#f0f0f0;"></div>
<div class="x" style="left:1456.50px;top:694.74px;font-size:12.00px;letter-spacing:-0.225px;font-weight:700;color:#222;">RAW SCORE</div>
<div style="position:absolute;left:1538.08px;top:699.30px;"><svg width="7" height="11.6" viewBox="0 0 14 23.2" fill="none"><path d="M7 0.4L13.6 9.4H0.4Z" fill="#d8d8d8"/><path d="M7 22.8L13.6 13.8H0.4Z" fill="#d8d8d8"/></svg></div>
<div style="position:absolute;left:265.00px;top:787.90px;width:1310.00px;height:1.00px;background:#ececec;"></div>
<div style="position:absolute;left:287.00px;top:752.50px;width:16.20px;height:16.20px;border:1.5px solid #1c1c1c;border-radius:1px;background:#fff;"></div>
<div class="x" style="left:337.60px;top:750.33px;font-size:14.63px;letter-spacing:0.021px;color:#216f53;">Database Yard</div>
<div style="position:absolute;left:594.30px;top:747.30px;"><svg width="27.2" height="27.2" viewBox="0 0 27.2 27.2" fill="none"><circle cx="13.6" cy="13.6" r="11.149999999999999" stroke="#eeeeee" stroke-width="4.9"/><circle cx="13.6" cy="13.6" r="11.149999999999999" stroke="#0ea654" stroke-width="4.9" stroke-dasharray="69.36 70.06" transform="rotate(-90 13.6 13.6)"/></svg></div>
<div class="x" style="left:636.90px;top:751.93px;font-size:14.63px;letter-spacing:0.545px;">99</div>
<div class="x" style="left:682.40px;top:750.33px;font-size:14.63px;letter-spacing:0.367px;">+99 pts</div>
<div style="position:absolute;left:737.37px;top:752.60px;"><svg width="12.6" height="13.5" viewBox="1.6 0.6 21.6 28.4" role="img" aria-label="🔥" fill="none"><path d="M11 1C12.4 5.2 17.6 8.8 18.8 14.4C19.4 12.6 19.6 11.4 19.4 9.6C22 12.6 23.2 16.2 22.6 20C21.8 25.2 17.6 28.6 12 28.6C6.2 28.6 2.2 24.6 2.2 19.4C2.2 15.4 4.4 12.6 5.8 10C6.4 11.6 6.8 12.6 7.8 13.6C7.6 9 8.6 4.4 11 1Z" fill="#f4651f"/><path d="M12.2 13C13.4 16 17.4 18.2 17.4 22.4C17.4 26 15 28.6 12 28.6C8.8 28.6 6.8 26.2 6.8 23.2C6.8 20.8 8.2 19.4 9 17.6C9.6 18.8 10 19.4 10.8 20C10.6 17.6 11 15 12.2 13Z" fill="#fbb03b"/></svg></div>
<div class="x" style="left:781.00px;top:750.33px;font-size:14.63px;letter-spacing:0.111px;">No Owner</div>
<div style="position:absolute;left:875.40px;top:757.35px;width:94.60px;height:6.30px;border-radius:3.2px;background:#a9c9bb;overflow:hidden;"><i style="display:block;width:83%;height:6.3px;border-radius:3.2px;background:#216f53;"></i></div>
<div class="x" style="left:978.20px;top:750.25px;font-size:12.54px;letter-spacing:0.507px;">83%</div>
<div class="x" style="left:1028.60px;top:750.33px;font-size:14.63px;letter-spacing:-1.328px;">17</div>
<div class="x" style="left:1167.90px;top:750.33px;font-size:14.63px;letter-spacing:0.548px;">20</div>
<div style="position:absolute;left:1305.90px;top:747.30px;"><svg width="27.2" height="27.2" viewBox="0 0 27.2 27.2" fill="none"><circle cx="13.6" cy="13.6" r="11.149999999999999" stroke="#eeeeee" stroke-width="4.9"/><circle cx="13.6" cy="13.6" r="11.149999999999999" stroke="#0ea654" stroke-width="4.9" stroke-dasharray="59.55 70.06" transform="rotate(-90 13.6 13.6)"/></svg></div>
<div class="x" style="left:1348.30px;top:751.93px;font-size:14.63px;letter-spacing:0.449px;">85</div>
<div class="x" style="left:1456.10px;top:750.33px;font-size:14.63px;letter-spacing:-1.208px;">14.1K</div>
<div style="position:absolute;left:265.00px;top:843.90px;width:1310.00px;height:1.00px;background:#ececec;"></div>
<div style="position:absolute;left:287.00px;top:808.50px;width:16.20px;height:16.20px;border:1.5px solid #1c1c1c;border-radius:1px;background:#fff;"></div>
<div class="x" style="left:337.60px;top:806.33px;font-size:14.63px;letter-spacing:0.024px;color:#216f53;">BSE Technologies</div>
<div style="position:absolute;left:594.30px;top:803.30px;"><svg width="27.2" height="27.2" viewBox="0 0 27.2 27.2" fill="none"><circle cx="13.6" cy="13.6" r="11.149999999999999" stroke="#eeeeee" stroke-width="4.9"/><circle cx="13.6" cy="13.6" r="11.149999999999999" stroke="#0ea654" stroke-width="4.9" stroke-dasharray="65.15 70.06" transform="rotate(-90 13.6 13.6)"/></svg></div>
<div class="x" style="left:636.90px;top:807.93px;font-size:14.63px;letter-spacing:0.528px;">93</div>
<div class="x" style="left:682.40px;top:806.33px;font-size:14.63px;letter-spacing:0.364px;">+86 pts</div>
<div style="position:absolute;left:737.35px;top:808.60px;"><svg width="12.6" height="13.5" viewBox="1.6 0.6 21.6 28.4" role="img" aria-label="🔥" fill="none"><path d="M11 1C12.4 5.2 17.6 8.8 18.8 14.4C19.4 12.6 19.6 11.4 19.4 9.6C22 12.6 23.2 16.2 22.6 20C21.8 25.2 17.6 28.6 12 28.6C6.2 28.6 2.2 24.6 2.2 19.4C2.2 15.4 4.4 12.6 5.8 10C6.4 11.6 6.8 12.6 7.8 13.6C7.6 9 8.6 4.4 11 1Z" fill="#f4651f"/><path d="M12.2 13C13.4 16 17.4 18.2 17.4 22.4C17.4 26 15 28.6 12 28.6C8.8 28.6 6.8 26.2 6.8 23.2C6.8 20.8 8.2 19.4 9 17.6C9.6 18.8 10 19.4 10.8 20C10.6 17.6 11 15 12.2 13Z" fill="#fbb03b"/></svg></div>
<div class="x" style="left:781.00px;top:806.33px;font-size:14.63px;letter-spacing:0.111px;">No Owner</div>
<div style="position:absolute;left:875.40px;top:813.35px;width:94.60px;height:6.30px;border-radius:3.2px;background:#a9c9bb;overflow:hidden;"><i style="display:block;width:50%;height:6.3px;border-radius:3.2px;background:#216f53;"></i></div>
<div class="x" style="left:978.20px;top:806.25px;font-size:12.54px;letter-spacing:0.517px;">50%</div>
<div class="x" style="left:1028.60px;top:806.33px;font-size:14.63px;letter-spacing:0.907px;">4</div>
<div class="x" style="left:1167.90px;top:806.33px;font-size:14.63px;letter-spacing:0.525px;">8</div>
<div style="position:absolute;left:1305.90px;top:803.30px;"><svg width="27.2" height="27.2" viewBox="0 0 27.2 27.2" fill="none"><circle cx="13.6" cy="13.6" r="11.149999999999999" stroke="#eeeeee" stroke-width="4.9"/><circle cx="13.6" cy="13.6" r="11.149999999999999" stroke="#fcbc0c" stroke-width="4.9" stroke-dasharray="35.03 70.06" transform="rotate(-90 13.6 13.6)"/></svg></div>
<div class="x" style="left:1348.30px;top:807.93px;font-size:14.63px;letter-spacing:0.535px;">50</div>
<div class="x" style="left:1456.10px;top:806.33px;font-size:14.63px;letter-spacing:-0.486px;">7.2K</div>
<div style="position:absolute;left:265.00px;top:899.90px;width:1310.00px;height:1.00px;background:#ececec;"></div>
<div style="position:absolute;left:287.00px;top:864.50px;width:16.20px;height:16.20px;border:1.5px solid #1c1c1c;border-radius:1px;background:#fff;"></div>
<div class="x" style="left:337.60px;top:862.33px;font-size:14.63px;letter-spacing:0.068px;color:#216f53;">Operation Stable Net</div>
<div style="position:absolute;left:594.30px;top:859.30px;"><svg width="27.2" height="27.2" viewBox="0 0 27.2 27.2" fill="none"><circle cx="13.6" cy="13.6" r="11.149999999999999" stroke="#eeeeee" stroke-width="4.9"/><circle cx="13.6" cy="13.6" r="11.149999999999999" stroke="#0ea654" stroke-width="4.9" stroke-dasharray="64.45 70.06" transform="rotate(-90 13.6 13.6)"/></svg></div>
<div class="x" style="left:636.90px;top:863.93px;font-size:14.63px;letter-spacing:0.473px;">92</div>
<div class="x" style="left:682.40px;top:862.33px;font-size:14.63px;letter-spacing:0.150px;">+74 pts</div>
<div style="position:absolute;left:735.84px;top:864.60px;"><svg width="12.6" height="13.5" viewBox="1.6 0.6 21.6 28.4" role="img" aria-label="🔥" fill="none"><path d="M11 1C12.4 5.2 17.6 8.8 18.8 14.4C19.4 12.6 19.6 11.4 19.4 9.6C22 12.6 23.2 16.2 22.6 20C21.8 25.2 17.6 28.6 12 28.6C6.2 28.6 2.2 24.6 2.2 19.4C2.2 15.4 4.4 12.6 5.8 10C6.4 11.6 6.8 12.6 7.8 13.6C7.6 9 8.6 4.4 11 1Z" fill="#f4651f"/><path d="M12.2 13C13.4 16 17.4 18.2 17.4 22.4C17.4 26 15 28.6 12 28.6C8.8 28.6 6.8 26.2 6.8 23.2C6.8 20.8 8.2 19.4 9 17.6C9.6 18.8 10 19.4 10.8 20C10.6 17.6 11 15 12.2 13Z" fill="#fbb03b"/></svg></div>
<div class="x" style="left:781.00px;top:862.33px;font-size:14.63px;letter-spacing:0.111px;">No Owner</div>
<div style="position:absolute;left:875.40px;top:869.35px;width:94.60px;height:6.30px;border-radius:3.2px;background:#a9c9bb;overflow:hidden;"><i style="display:block;width:100%;height:6.3px;border-radius:3.2px;background:#216f53;"></i></div>
<div class="x" style="left:978.20px;top:862.25px;font-size:12.54px;letter-spacing:-0.067px;">100%</div>
<div class="x" style="left:1028.60px;top:862.33px;font-size:14.63px;letter-spacing:0.511px;">3</div>
<div class="x" style="left:1167.90px;top:862.33px;font-size:14.63px;letter-spacing:0.907px;">4</div>
<div style="position:absolute;left:1305.90px;top:859.30px;"><svg width="27.2" height="27.2" viewBox="0 0 27.2 27.2" fill="none"><circle cx="13.6" cy="13.6" r="11.149999999999999" stroke="#eeeeee" stroke-width="4.9"/><circle cx="13.6" cy="13.6" r="11.149999999999999" stroke="#0ea654" stroke-width="4.9" stroke-dasharray="52.54 70.06" transform="rotate(-90 13.6 13.6)"/></svg></div>
<div class="x" style="left:1348.30px;top:863.93px;font-size:14.63px;letter-spacing:0.012px;">75</div>
<div class="x" style="left:1456.10px;top:862.33px;font-size:14.63px;letter-spacing:-0.283px;">7K</div>
<div style="position:absolute;left:265.00px;top:955.90px;width:1310.00px;height:1.00px;background:#ececec;"></div>
<div style="position:absolute;left:287.00px;top:920.50px;width:16.20px;height:16.20px;border:1.5px solid #1c1c1c;border-radius:1px;background:#fff;"></div>
<div class="x" style="left:337.60px;top:918.33px;font-size:14.63px;letter-spacing:0.181px;color:#216f53;">Certainty Tracker Sky Tap</div>
<div style="position:absolute;left:594.30px;top:915.30px;"><svg width="27.2" height="27.2" viewBox="0 0 27.2 27.2" fill="none"><circle cx="13.6" cy="13.6" r="11.149999999999999" stroke="#eeeeee" stroke-width="4.9"/><circle cx="13.6" cy="13.6" r="11.149999999999999" stroke="#0ea654" stroke-width="4.9" stroke-dasharray="61.65 70.06" transform="rotate(-90 13.6 13.6)"/></svg></div>
<div class="x" style="left:636.90px;top:919.93px;font-size:14.63px;letter-spacing:0.525px;">88</div>
<div class="x" style="left:682.40px;top:918.33px;font-size:14.63px;letter-spacing:0.195px;">+79 pts</div>
<div style="position:absolute;left:736.16px;top:920.60px;"><svg width="12.6" height="13.5" viewBox="1.6 0.6 21.6 28.4" role="img" aria-label="🔥" fill="none"><path d="M11 1C12.4 5.2 17.6 8.8 18.8 14.4C19.4 12.6 19.6 11.4 19.4 9.6C22 12.6 23.2 16.2 22.6 20C21.8 25.2 17.6 28.6 12 28.6C6.2 28.6 2.2 24.6 2.2 19.4C2.2 15.4 4.4 12.6 5.8 10C6.4 11.6 6.8 12.6 7.8 13.6C7.6 9 8.6 4.4 11 1Z" fill="#f4651f"/><path d="M12.2 13C13.4 16 17.4 18.2 17.4 22.4C17.4 26 15 28.6 12 28.6C8.8 28.6 6.8 26.2 6.8 23.2C6.8 20.8 8.2 19.4 9 17.6C9.6 18.8 10 19.4 10.8 20C10.6 17.6 11 15 12.2 13Z" fill="#fbb03b"/></svg></div>
<div class="x" style="left:781.00px;top:918.33px;font-size:14.63px;letter-spacing:0.111px;">No Owner</div>
<div style="position:absolute;left:875.40px;top:925.35px;width:94.60px;height:6.30px;border-radius:3.2px;background:#a9c9bb;overflow:hidden;"><i style="display:block;width:67%;height:6.3px;border-radius:3.2px;background:#216f53;"></i></div>
<div class="x" style="left:978.20px;top:918.25px;font-size:12.54px;letter-spacing:0.306px;">67%</div>
<div class="x" style="left:1028.60px;top:918.33px;font-size:14.63px;letter-spacing:0.511px;">3</div>
<div class="x" style="left:1167.90px;top:918.33px;font-size:14.63px;letter-spacing:0.907px;">4</div>
<div style="position:absolute;left:1305.90px;top:915.30px;"><svg width="27.2" height="27.2" viewBox="0 0 27.2 27.2" fill="none"><circle cx="13.6" cy="13.6" r="11.149999999999999" stroke="#eeeeee" stroke-width="4.9"/><circle cx="13.6" cy="13.6" r="11.149999999999999" stroke="#0ea654" stroke-width="4.9" stroke-dasharray="52.54 70.06" transform="rotate(-90 13.6 13.6)"/></svg></div>
<div class="x" style="left:1348.30px;top:919.93px;font-size:14.63px;letter-spacing:0.012px;">75</div>
<div class="x" style="left:1456.10px;top:918.33px;font-size:14.63px;letter-spacing:0.097px;">6K</div>
<div style="position:absolute;left:287.00px;top:976.50px;width:16.20px;height:16.20px;border:1.5px solid #1c1c1c;border-radius:1px;background:#fff;"></div>
<div class="x" style="left:337.60px;top:974.33px;font-size:14.63px;letter-spacing:0.005px;color:#216f53;">Space Lab</div>
<div style="position:absolute;left:594.30px;top:971.30px;"><svg width="27.2" height="27.2" viewBox="0 0 27.2 27.2" fill="none"><circle cx="13.6" cy="13.6" r="11.149999999999999" stroke="#eeeeee" stroke-width="4.9"/><circle cx="13.6" cy="13.6" r="11.149999999999999" stroke="#0ea654" stroke-width="4.9" stroke-dasharray="49.74 70.06" transform="rotate(-90 13.6 13.6)"/></svg></div>
<div class="x" style="left:636.90px;top:975.93px;font-size:14.63px;letter-spacing:-1.328px;">71</div>
<div class="x" style="left:682.40px;top:974.33px;font-size:14.63px;letter-spacing:0.171px;">+27 pts</div>
<div style="position:absolute;left:736.00px;top:976.60px;"><svg width="12.6" height="13.5" viewBox="1.6 0.6 21.6 28.4" role="img" aria-label="🔥" fill="none"><path d="M11 1C12.4 5.2 17.6 8.8 18.8 14.4C19.4 12.6 19.6 11.4 19.4 9.6C22 12.6 23.2 16.2 22.6 20C21.8 25.2 17.6 28.6 12 28.6C6.2 28.6 2.2 24.6 2.2 19.4C2.2 15.4 4.4 12.6 5.8 10C6.4 11.6 6.8 12.6 7.8 13.6C7.6 9 8.6 4.4 11 1Z" fill="#f4651f"/><path d="M12.2 13C13.4 16 17.4 18.2 17.4 22.4C17.4 26 15 28.6 12 28.6C8.8 28.6 6.8 26.2 6.8 23.2C6.8 20.8 8.2 19.4 9 17.6C9.6 18.8 10 19.4 10.8 20C10.6 17.6 11 15 12.2 13Z" fill="#fbb03b"/></svg></div>
<div class="x" style="left:781.00px;top:974.33px;font-size:14.63px;letter-spacing:0.111px;">No Owner</div>
<div style="position:absolute;left:875.40px;top:981.35px;width:94.60px;height:6.30px;border-radius:3.2px;background:#a9c9bb;overflow:hidden;"><i style="display:block;width:83%;height:6.3px;border-radius:3.2px;background:#216f53;"></i></div>
<div class="x" style="left:978.20px;top:974.25px;font-size:12.54px;letter-spacing:0.507px;">83%</div>
<div class="x" style="left:1028.60px;top:974.33px;font-size:14.63px;letter-spacing:0.525px;">8</div>
<div class="x" style="left:1167.90px;top:974.33px;font-size:14.63px;letter-spacing:-1.020px;">12</div>
<div style="position:absolute;left:1305.90px;top:971.30px;"><svg width="27.2" height="27.2" viewBox="0 0 27.2 27.2" fill="none"><circle cx="13.6" cy="13.6" r="11.149999999999999" stroke="#eeeeee" stroke-width="4.9"/><circle cx="13.6" cy="13.6" r="11.149999999999999" stroke="#0ea654" stroke-width="4.9" stroke-dasharray="46.94 70.06" transform="rotate(-90 13.6 13.6)"/></svg></div>
<div class="x" style="left:1348.30px;top:975.93px;font-size:14.63px;letter-spacing:0.166px;">67</div>
<div class="x" style="left:1456.10px;top:974.33px;font-size:14.63px;letter-spacing:0.180px;">3.4K</div>
<div style="position:absolute;left:1532px;top:932px;width:48px;height:48px;border-radius:24px;background:#216f53;box-shadow:0 3px 14px rgba(0,0,0,.22);">
<svg width="48" height="48" viewBox="0 0 96 96" style="position:absolute;left:0;top:0;"><path d="M48 26C52 26 54.5 28 57 32.5L71 57C75 64 71 70 64.5 70C60 70 57 68 54.5 63.5L52 59C50 55.5 46 55.5 44 59L41.5 63.5C39 68 36 70 31.5 70C25 70 21 64 25 57L39 32.5C41.5 28 44 26 48 26Z" fill="#fff"/><circle cx="61" cy="59.5" r="9.2" fill="#216f53" stroke="#fff" stroke-width="3"/></svg></div>
</div>
</body>
</html>
